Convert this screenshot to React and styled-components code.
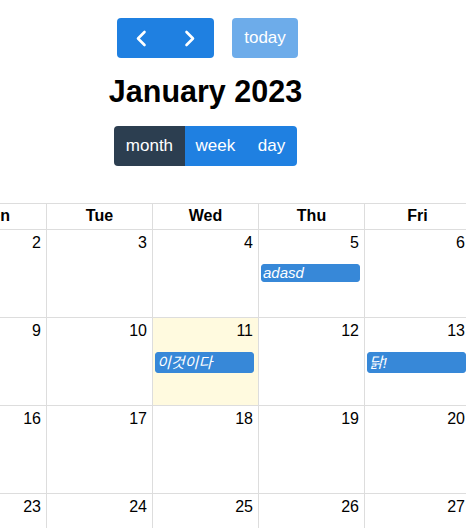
import React from 'react';
import styled, { createGlobalStyle, css } from 'styled-components';

const GlobalStyle = createGlobalStyle`
  html, body {
    margin: 0;
    padding: 0;
    overflow: hidden;
    background: #fff;
  }
  body {
    font-family: "Liberation Sans", "Noto Sans CJK KR", Arial, sans-serif;
    color: #000;
  }
  #root {
    width: 466px;
    height: 528px;
    overflow: hidden;
  }
`;

const Calendar = styled.div`
  width: 743px;
  margin-left: -166px;
  padding-top: 18px;
  box-sizing: border-box;
`;

const Toolbar = styled.div`
  display: flex;
  flex-direction: column;
  align-items: center;
`;

const ToolbarRow = styled.div`
  display: flex;
  align-items: center;
  gap: 18px;
  margin-left: 4px;
`;

const ButtonGroup = styled.div`
  display: flex;
  border-radius: 4px;
  overflow: hidden;
`;

const Button = styled.button`
  height: 40px;
  padding: 0 ${({ tight }) => (tight ? '10.5px' : '12px')};
  border: 0;
  margin: 0;
  display: flex;
  align-items: center;
  justify-content: center;
  font-family: inherit;
  font-size: 17px;
  line-height: 40px;
  color: #fff;
  background: #1f80e1;
  cursor: pointer;

  ${({ icon }) =>
    icon &&
    css`
      padding: 0 12.25px;
    `};

  ${({ active }) =>
    active &&
    css`
      background: #2c3e50;
    `};

  ${({ disabled }) =>
    disabled &&
    css`
      padding: 0 12.25px;
      background: #6dacea;
      border-radius: 4px;
      cursor: default;
    `};
`;

const Title = styled.h2`
  margin: 16px 0 17px;
  font-size: 30.5px;
  line-height: 35px;
  font-weight: 700;
`;

const Table = styled.div`
  margin-top: 37px;
  border-top: 1px solid #ddd;
  border-left: 1px solid #ddd;
`;

const Row = styled.div`
  display: grid;
  grid-template-columns: repeat(7, 106px);
`;

const HeadCell = styled.div`
  height: 26px;
  box-sizing: border-box;
  padding-top: 3px;
  border-right: 1px solid #ddd;
  border-bottom: 1px solid #ddd;
  text-align: center;
  font-size: 16px;
  font-weight: 700;
`;

const DayCell = styled.div`
  height: 88px;
  box-sizing: border-box;
  border-right: 1px solid #ddd;
  border-bottom: 1px solid #ddd;
  background: ${({ today }) => (today ? '#fffadf' : '#fff')};
`;

const DayNumber = styled.div`
  padding: 4px 5px 4px 4px;
  text-align: right;
  font-size: 16px;
  line-height: 18px;
`;

const Events = styled.div`
  padding: 8px 4px 0 2px;
`;

const Event = styled.div`
  background: #3788d8;
  border: 1px solid #3788d8;
  border-radius: 3px;
  color: #fff;
  font-size: 15px;
  line-height: ${({ tall }) => (tall ? '19px' : '16px')};
  font-style: italic;
  padding: 0 1px;
  white-space: nowrap;
  overflow: hidden;
`;

const Chevron = ({ dir }) => (
  <svg width="24" height="24" viewBox="0 0 24 24" fill="none" stroke="#fff" strokeWidth="2.6" strokeLinecap="round" strokeLinejoin="round">
    <polyline points={dir === 'left' ? '15.5,6 9,12.5 15.5,19' : '8.5,6 15,12.5 8.5,19'} />
  </svg>
);

const weekdays = ['Sun', 'Mon', 'Tue', 'Wed', 'Thu', 'Fri', 'Sat'];

const events = {
  5: 'adasd',
  11: '이것이다',
  13: '닭!',
};

const isHangul = (text) => /[\uac00-\ud7af]/.test(text);

const buildWeeks = () => {
  const weeks = [];
  let day = 1;
  for (let w = 0; w < 6; w += 1) {
    const week = [];
    for (let d = 0; d < 7; d += 1) {
      const n = day > 31 ? day - 31 : day;
      week.push({ key: day, n, event: day <= 31 ? events[day] : null, today: day === 11 });
      day += 1;
    }
    weeks.push(week);
  }
  return weeks;
};

const App = () => {
  const weeks = buildWeeks();

  return (
    <>
      <GlobalStyle />
      <Calendar>
        <Toolbar>
          <ToolbarRow>
            <ButtonGroup>
              <Button icon aria-label="prev">
                <Chevron dir="left" />
              </Button>
              <Button icon aria-label="next">
                <Chevron dir="right" />
              </Button>
            </ButtonGroup>
            <Button disabled>today</Button>
          </ToolbarRow>
          <Title>January 2023</Title>
          <ButtonGroup>
            <Button active>month</Button>
            <Button tight>week</Button>
            <Button>day</Button>
          </ButtonGroup>
        </Toolbar>
        <Table>
          <Row>
            {weekdays.map((d) => (
              <HeadCell key={d}>{d}</HeadCell>
            ))}
          </Row>
          {weeks.map((week) => (
            <Row key={week[0].key}>
              {week.map((cell) => (
                <DayCell key={cell.key} today={cell.today}>
                  <DayNumber>{cell.n}</DayNumber>
                  {cell.event && (
                    <Events>
                      <Event tall={isHangul(cell.event)}>{cell.event}</Event>
                    </Events>
                  )}
                </DayCell>
              ))}
            </Row>
          ))}
        </Table>
      </Calendar>
    </>
  );
};

export default App;
